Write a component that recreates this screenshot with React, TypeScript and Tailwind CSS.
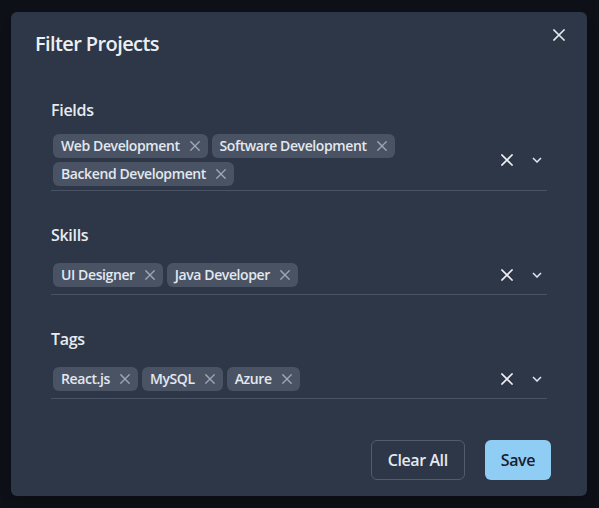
const SECTIONS = [
  { label: "Fields", values: ["Web Development", "Software Development", "Backend Development"] },
  { label: "Skills", values: ["UI Designer", "Java Developer"] },
  { label: "Tags", values: ["React.js", "MySQL", "Azure"] },
];

function Cross({ className }: { className?: string }) {
  return (
    <svg viewBox="0 0 12 12" className={className} fill="none" stroke="currentColor" strokeWidth="1.6" strokeLinecap="square">
      <path d="M1 1 L11 11 M11 1 L1 11" />
    </svg>
  );
}

function Chip({ text }: { text: string }) {
  return (
    <span className="m-[2px] inline-flex h-6 items-center rounded-md bg-[#4a5363] pl-2 pr-2 text-sm font-semibold tracking-[-0.4px] text-[#e2e8f0]">
      {text}
      <Cross className="ml-[10px] h-[10px] w-[10px] text-[#a0a7b4]" />
    </span>
  );
}

function MultiSelect({ label, values }: { label: string; values: string[] }) {
  return (
    <div>
      <p className="mb-2 text-base leading-6 font-semibold tracking-[-0.3px] text-[#e8ebf0]">{label}</p>
      <div className="flex min-h-[40px] items-center border-b border-[#4a5363]">
        <div className="flex flex-1 flex-wrap py-[2px]">
          {values.map((v) => <Chip key={v} text={v} />)}
        </div>
        <div className="flex items-center gap-[19px] pr-[5px]">
          <Cross className="h-3 w-3 text-[#eef0f4]" />
          <svg viewBox="0 0 10 6" className="h-[6px] w-[10px] text-[#e2e8f0]" fill="none" stroke="currentColor" strokeWidth="1.5">
            <path d="M1 1 L5 5 L9 1" />
          </svg>
        </div>
      </div>
    </div>
  );
}

export default function App() {
  return (
    <div className="min-h-[508px] bg-[#0d1016] pt-[12px] pl-[11px] font-['Open_Sans',sans-serif]">
      <div className="relative w-[576px] rounded-md bg-[#2d3748] shadow-lg">
        <button className="absolute top-[7px] right-[12px] flex h-8 w-8 items-center justify-center text-[#e2e8f0]">
          <Cross className="h-3 w-3" />
        </button>
        <h2 className="px-6 pt-[18px] pb-[14px] text-xl leading-7 font-semibold tracking-[-0.6px] text-[#eceff3]">Filter Projects</h2>
        <div className="flex flex-col gap-[32px] px-10 pt-[26px] pb-[25px]">
          {SECTIONS.map((s) => <MultiSelect key={s.label} label={s.label} values={s.values} />)}
        </div>
        <div className="flex justify-end gap-5 pt-4 pr-9 pb-4">
          <button className="h-10 rounded-md border border-[#525c6c] px-4 text-base font-semibold tracking-[-0.4px] text-[#e6e9ee]">Clear All</button>
          <button className="h-10 rounded-md bg-[#90cdf4] px-4 text-base font-semibold tracking-[-0.4px] text-[#1a202c]">Save</button>
        </div>
      </div>
    </div>
  );
}
